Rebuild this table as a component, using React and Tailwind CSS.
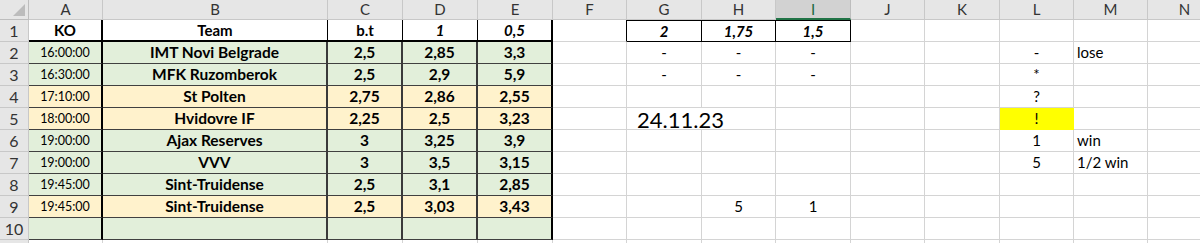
import React from "react";

const cols = ["A","B","C","D","E","F","G","H","I","J","K","L","M","N"];
const G = "bg-[#e2efda]";
const O = "bg-[#fff2cc]";

const rows = [
  { t: "16:00:00", n: "IMT Novi Belgrade", c: "2,5", d: "2,85", e: "3,3", bg: G, g: "-", h: "-", i: "-", l: "-", m: "lose" },
  { t: "16:30:00", n: "MFK Ruzomberok", c: "2,5", d: "2,9", e: "5,9", bg: G, g: "-", h: "-", i: "-", l: "*" },
  { t: "17:10:00", n: "St Polten", c: "2,75", d: "2,86", e: "2,55", bg: O, l: "?" },
  { t: "18:00:00", n: "Hvidovre IF", c: "2,25", d: "2,5", e: "3,23", bg: O, date: "24.11.23", l: "!", yellow: true },
  { t: "19:00:00", n: "Ajax Reserves", c: "3", d: "3,25", e: "3,9", bg: G, l: "1", m: "win" },
  { t: "19:00:00", n: "VVV", c: "3", d: "3,5", e: "3,15", bg: G, l: "5", m: "1/2 win" },
  { t: "19:45:00", n: "Sint-Truidense", c: "2,5", d: "3,1", e: "2,85", bg: G },
  { t: "19:45:00", n: "Sint-Truidense", c: "2,5", d: "3,03", e: "3,43", bg: O, h: "5", i: "1" },
  { t: "", n: "", c: "", d: "", e: "", bg: G },
];

const grid = "border-r border-b border-[#d4d4d4]";

function Cell({ className = "", children }) {
  return (
    <div className={`flex items-center justify-center overflow-visible whitespace-nowrap ${className}`}>
      {children}
    </div>
  );
}

export default function App() {
  return (
    <div className="w-[1200px] h-[243px] overflow-hidden bg-white text-[#000] font-['Lato','Liberation_Sans',sans-serif]">
      <div className="grid grid-cols-[29px_74px_225px_75px_75px_75px_74px_75px_74px_75px_74px_75px_74px_74px_74px] grid-rows-[20px_repeat(11,22px)] w-[1222px]">
        {/* header row */}
        <div className="relative bg-[#e6e6e6] border-r border-b border-[#bdbdbd]">
          <svg className="absolute right-[3px] bottom-[3px]" width="12" height="12" viewBox="0 0 12 12">
            <polygon points="12,0 12,12 0,12" fill="#bcbcbc" />
          </svg>
        </div>
        {cols.map((c) =>
          c === "I" ? (
            <Cell key={c} className="bg-[#d2d2d2] border-r border-[#bdbdbd] border-b-2 border-b-[#217346] text-[15px] text-[#1d6a3f] pt-[1px]">{c}</Cell>
          ) : (
            <Cell key={c} className="bg-[#e6e6e6] border-r border-b border-[#c8c8c8] text-[15px] text-[#333]">{c}</Cell>
          )
        )}

        {/* row 1 */}
        <Cell className="bg-[#e6e6e6] border-r border-b border-[#c8c8c8] text-[16px] text-[#333]">1</Cell>
        <Cell className="border-r-2 border-b-2 border-[#000] font-bold text-[15px]">KO</Cell>
        <Cell className="border-r border-b-2 border-[#000] font-bold text-[15px]">Team</Cell>
        <Cell className="border-r border-b-2 border-[#000] font-bold text-[15px]">b.t</Cell>
        <Cell className="border-r border-b-2 border-[#000] font-bold italic text-[15px]">1</Cell>
        <Cell className="border-r-2 border-b-2 border-[#000] font-bold italic text-[15px]">0,5</Cell>
        <Cell className="border-r border-b border-r-[#000] border-b-[#d4d4d4]"></Cell>
        <Cell className="border-r border-b border-t border-[#000] font-bold italic text-[15px]">2</Cell>
        <Cell className="border-r border-b border-t border-[#000] font-bold italic text-[15px]">1,75</Cell>
        <Cell className="border-r border-b border-t border-[#000] font-bold italic text-[15px]">1,5</Cell>
        {["J","K","L","M","N"].map((c) => <Cell key={c} className={grid}></Cell>)}

        {rows.map((r, idx) => {
          const num = idx + 2;
          return (
            <React.Fragment key={num}>
              <Cell className="bg-[#e6e6e6] border-r border-b border-[#c8c8c8] text-[16px] text-[#333]">{num}</Cell>
              <Cell className={`${r.bg} border-r-2 border-b border-r-[#000] border-b-[#404040] text-[12.5px] pt-[1px]`}>{r.t}</Cell>
              <Cell className={`${r.bg} border-r-2 border-b border-r-[#3a3a3a] border-b-[#404040] font-bold text-[15.5px]`}>{r.n}</Cell>
              <Cell className={`${r.bg} border-r-2 border-b border-r-[#3a3a3a] border-b-[#404040] font-bold text-[15.5px]`}>{r.c}</Cell>
              <Cell className={`${r.bg} border-r-2 border-b border-r-[#3a3a3a] border-b-[#404040] font-bold text-[15.5px]`}>{r.d}</Cell>
              <Cell className={`${r.bg} border-r-2 border-b border-r-[#000] border-b-[#404040] font-bold text-[15.5px]`}>{r.e}</Cell>
              <Cell className={grid}></Cell>
              {r.date ? (
                <div className={`col-span-2 flex items-center pl-[10px] pt-[2px] text-[22px] ${grid}`}>{r.date}</div>
              ) : (
                <>
                  <Cell className={`${grid} text-[15px]`}>{r.g || ""}</Cell>
                  <Cell className={`${grid} text-[15px]`}>{r.h || ""}</Cell>
                </>
              )}
              <Cell className={`${grid} text-[15px]`}>{r.i || ""}</Cell>
              <Cell className={grid}></Cell>
              <Cell className={grid}></Cell>
              <Cell className={`${r.yellow ? "bg-[#ffff00] border-r border-b border-[#ffff00]" : grid} text-[15px]`}>{r.l || ""}</Cell>
              <div className={`${grid} flex items-center pl-[3px] text-[15px] whitespace-nowrap`}>{r.m || ""}</div>
              <Cell className={grid}></Cell>
            </React.Fragment>
          );
        })}
        {/* row 11 (only a sliver visible) */}
        <Cell className="bg-[#e6e6e6] border-r border-b border-[#c8c8c8]"></Cell>
        {cols.map((c) => <Cell key={c} className={grid}></Cell>)}
      </div>
    </div>
  );
}
